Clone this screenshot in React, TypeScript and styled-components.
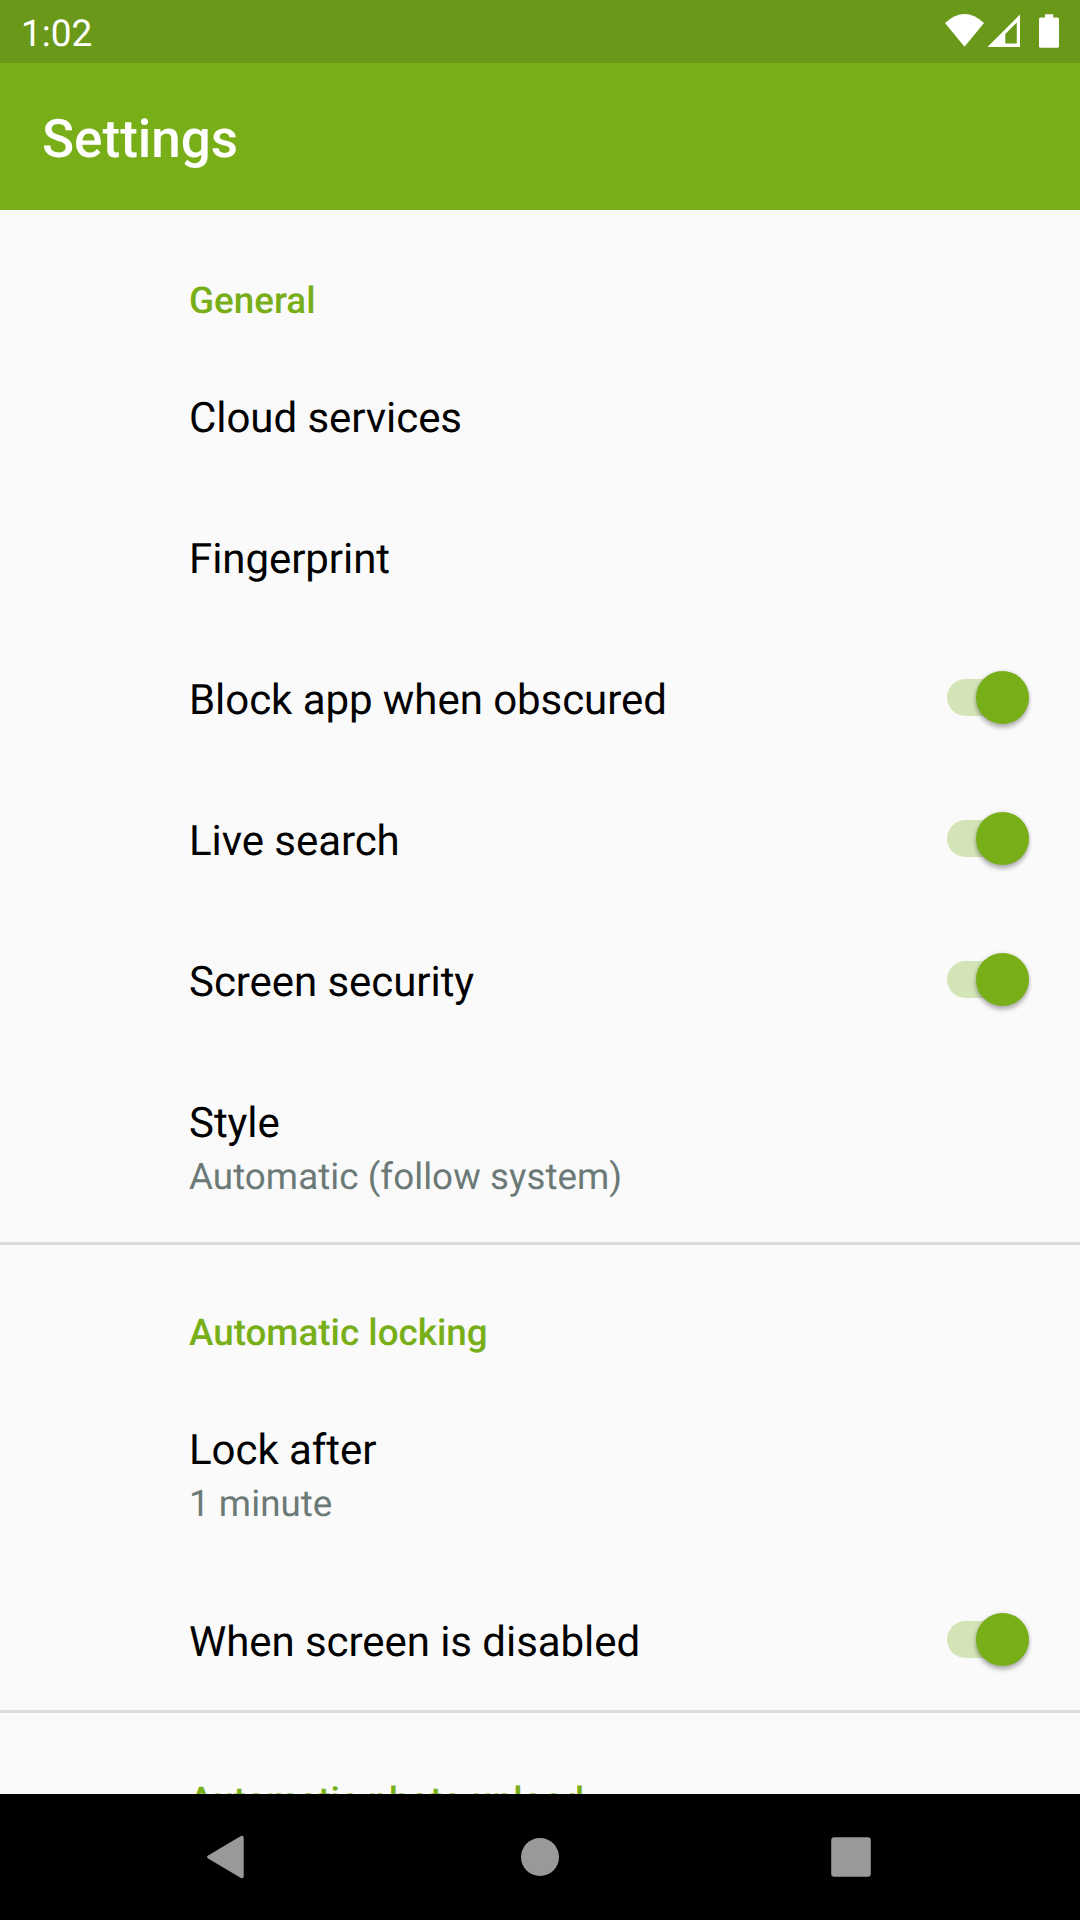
import React from 'react';
import styled, { createGlobalStyle } from 'styled-components';

const green = '#78af19';

const Global = createGlobalStyle`
  * { box-sizing: border-box; }
  body { margin: 0; font-family: Roboto, sans-serif; text-rendering: geometricPrecision; }
`;
const Screen = styled.div`
  width: 1080px; height: 1920px; overflow: hidden;
  display: flex; flex-direction: column; background: #fafafa;
`;
const StatusBar = styled.header`
  height: 63px; flex: none; background: #6a9818; color: #fff;
  display: flex; align-items: center; justify-content: space-between; padding: 5px 0 0 21px;
  font-size: 37px;
`;
const StatusIcons = styled.svg`width: 160px; height: 63px; display: block; margin-top: -5px;`;
const AppBar = styled.div`
  height: 147px; flex: none; background: ${green}; color: #fff;
  display: flex; align-items: center; padding: 5px 42px 0; font-size: 53px; font-weight: 500;
`;
const Content = styled.main`flex: 1; min-height: 0; overflow: hidden;`;
const Section = styled.section`
  & + & { box-shadow: inset 0 3px 0 #dcdcdc; margin-top: -2px; }
`;
const Heading = styled.h2`
  margin: 0; padding: 68px 0 0 189px; height: 137px;
  font-size: 36.8px; line-height: 45px; font-weight: 500; color: ${green};
`;
const Row = styled.div<{ $tall?: boolean }>`
  height: ${p => (p.$tall ? 192 : 141)}px; padding: 47px 51px 0 189px;
  display: flex; align-items: flex-start; justify-content: space-between;
`;
const Title = styled.div`font-size: 42px; line-height: 50px; letter-spacing: -0.06px; color: #000;`;
const Summary = styled.div`
  font-size: 36.75px; line-height: 43px; letter-spacing: 0.05px; margin-top: 6px; color: #6b7977;
`;
const Track = styled.div`
  width: 82px; height: 37px; margin-top: 3px; border-radius: 19px; background: #d3e4b6;
  display: flex; align-items: center; justify-content: flex-end;
`;
const Thumb = styled.div`
  width: 53px; height: 53px; flex: none; border-radius: 50%; background: ${green};
  box-shadow: 0 4px 4px rgba(0,0,0,.25), 0 0 4px rgba(0,0,0,.14);
`;
const NavBar = styled.nav`height: 126px; flex: none; background: #000;`;

function Item({ title, summary, on }: { title: string; summary?: string; on?: boolean }) {
  return (
    <Row $tall={!!summary}>
      <div><Title>{title}</Title>{summary && <Summary>{summary}</Summary>}</div>
      {on && <Track><Thumb /></Track>}
    </Row>
  );
}

export default function App() {
  return (
    <Screen>
      <Global />
      <StatusBar><span>1:02</span>
        <StatusIcons viewBox="0 0 160 63" fill="#fff">
          <path d="M25 23Q44.5 5 64 23L44.5 46.7Z" />
          <path fillRule="evenodd" d="M67.5 47L100 14.5V47ZM85.3 43.5H96.8V22.5L85.3 34Z" />
          <path d="M120.5 17.5H125V14.3H133.2V17.5H137.5Q139 17.5 139 19V46.3Q139 47.8 137.5 47.8H120.5Q119 47.8 119 46.3V19Q119 17.5 120.5 17.5Z" />
        </StatusIcons>
      </StatusBar>
      <AppBar>Settings</AppBar>
      <Content>
        <Section>
          <Heading>General</Heading>
          <Item title="Cloud services" /><Item title="Fingerprint" />
          <Item title="Block app when obscured" on /><Item title="Live search" on />
          <Item title="Screen security" on />
          <Item title="Style" summary="Automatic (follow system)" />
        </Section>
        <Section>
          <Heading>Automatic locking</Heading>
          <Item title="Lock after" summary="1 minute" />
          <Item title="When screen is disabled" on />
        </Section>
        <Section><Heading>Automatic photo upload</Heading></Section>
      </Content>
      <NavBar>
        <svg width="1080" height="126" fill="#999">
          <path d="M208.5 61.2L240.5 42.2Q243.7 40.8 243.7 44V82Q243.7 85.2 240.5 83.8L208.5 64.8Q205.5 63 208.5 61.2Z" />
          <circle cx="540" cy="63" r="19" /><rect x="831.2" y="43.2" width="39.6" height="39.6" rx="3" />
        </svg>
      </NavBar>
    </Screen>
  );
}
